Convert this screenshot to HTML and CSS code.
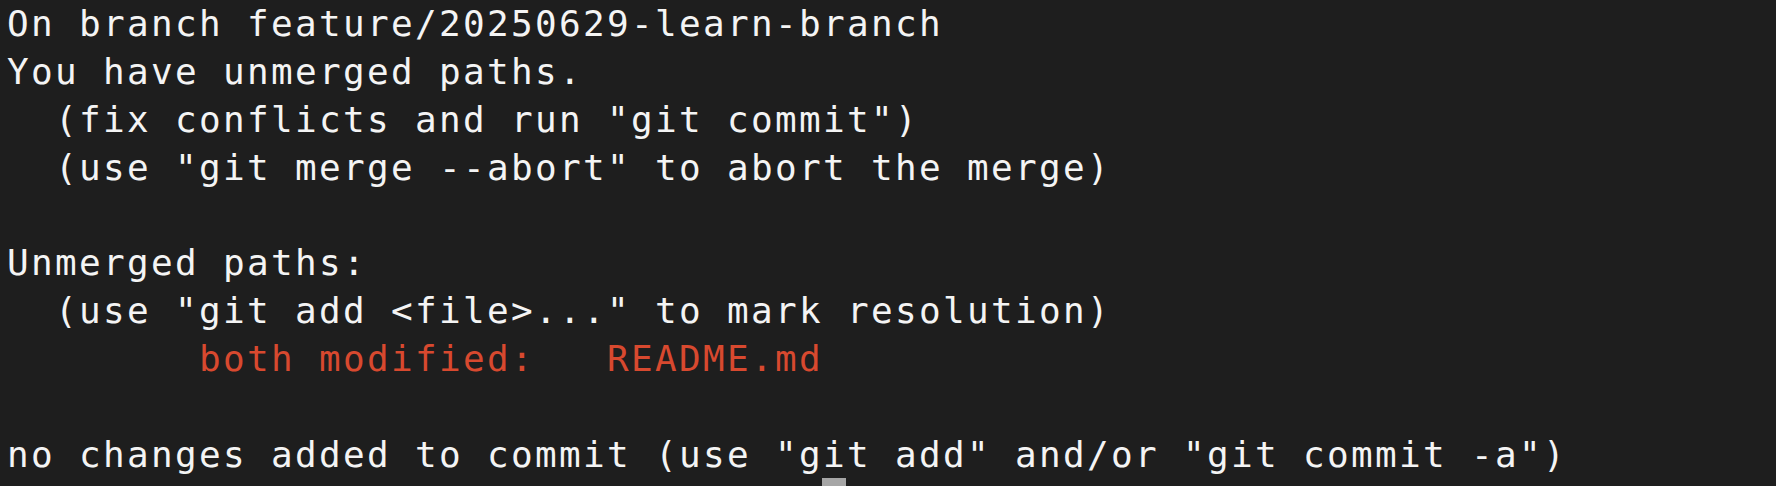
FILE: index.html
```html
<!DOCTYPE html>
<html lang="en">
<head>
<meta charset="utf-8">
<title>Terminal - git status</title>
<link rel="stylesheet" href="styles.css">
</head>
<body>
<div class="term">
<div class="line">On branch feature/20250629-learn-branch</div>
<div class="line">You have unmerged paths.</div>
<div class="line">  (fix conflicts and run "git commit")</div>
<div class="line">  (use "git merge --abort" to abort the merge)</div>
<div class="line"> </div>
<div class="line">Unmerged paths:</div>
<div class="line">  (use "git add &lt;file&gt;..." to mark resolution)</div>
<div class="line">        <span class="red">both modified:   README.md</span></div>
<div class="line"> </div>
<div class="line">no changes added to commit (use "git add" and/or "git commit -a")</div>
<div class="line">                                  <span class="cursor"></span></div>
</div>
</body>
</html>
```

FILE: styles.css
```css
html, body {
  margin: 0;
  padding: 0;
  background: #1e1e1e;
  overflow: hidden;
}

.term {
  width: 1776px;
  height: 486px;
  box-sizing: border-box;
  padding: 0 0 0 7px;
  font-family: "DejaVu Sans Mono", "Liberation Mono", monospace;
  font-size: 36px;
  letter-spacing: 2.325px;
  line-height: 47.85px;
  color: #f4f4f4;
  overflow: hidden;
}

.line {
  white-space: pre;
  height: 47.85px;
}

.red {
  color: #d8492f;
}

.cursor {
  display: inline-block;
  width: 24px;
  height: 47.85px;
  margin-left: -1px;
  vertical-align: top;
  background: #a6a6a6;
}
```
